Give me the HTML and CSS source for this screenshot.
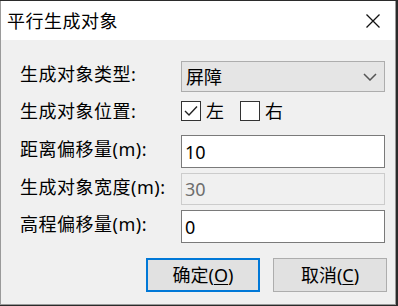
FILE: index.html
```html
<!DOCTYPE html>
<html lang="zh-CN">
<head>
    <meta charset="UTF-8">
    <meta name="viewport" content="width=device-width, initial-scale=1.0">
    <title>平行生成对象</title>
    <link rel="stylesheet" href="styles.css">
</head>
<body>
    <div class="window">
        <div class="titlebar">
            <span class="title">平行生成对象</span>
            <span class="closeBtn">
                <svg width="16" height="16" viewBox="0 0 16 16">
                    <path d="M1.5 1.5 L14.5 14.5 M14.5 1.5 L1.5 14.5" stroke="#111" stroke-width="1.3" fill="none"/>
                </svg>
            </span>
        </div>
        <div class="content">
            <div class="form">
                <label class="lbl">生成对象类型:</label>
                <div class="combo">
                    <span>屏障</span>
                    <svg width="14" height="8" viewBox="0 0 14 8">
                        <path d="M1 1 L7 7 L13 1" stroke="#555" stroke-width="1.5" fill="none"/>
                    </svg>
                </div>

                <label class="lbl">生成对象位置:</label>
                <div class="checks">
                    <span class="chk">
                        <span class="box">
                            <svg width="18" height="18" viewBox="0 0 18 18">
                                <path d="M3 9 L7 13 L15 4.5" stroke="#222" stroke-width="1.4" fill="none"/>
                            </svg>
                        </span>
                        左
                    </span>
                    <span class="chk">
                        <span class="box"></span>
                        右
                    </span>
                </div>

                <label class="lbl">距离偏移量(m):</label>
                <div class="field">10</div>

                <label class="lbl">生成对象宽度(m):</label>
                <div class="field disabled">30</div>

                <label class="lbl">高程偏移量(m):</label>
                <div class="field">0</div>
            </div>
            <div class="buttons">
                <button class="btn default">确定(<u>O</u>)</button>
                <button class="btn">取消(<u>C</u>)</button>
            </div>
        </div>
    </div>
</body>
</html>
```

FILE: styles.css
```css
body{
    margin: 0;
    background: #2b2b2b;
    font-family: "Noto Sans", "Noto Sans CJK SC", sans-serif;
    font-size: 18px;
    color: #000;
}
.window{
    width: 396px;
    height: 304px;
    margin-top: 1px;
    border: 1px solid #9a9a9a;
    border-top: none;
    box-sizing: border-box;
    background: #f0f0f0;
    display: flex;
    flex-direction: column;
}
.titlebar{
    height: 39px;
    background: #fff;
    display: flex;
    align-items: center;
    justify-content: space-between;
    padding: 0 14px 0 6px;
}
.title{
    font-size: 18px;
    line-height: 20px;
    letter-spacing: 0.5px;
}
.closeBtn{
    display: flex;
}
.content{
    padding: 21px 10px 0 19px;
}
.form{
    display: grid;
    grid-template-columns: 161px 204px;
    grid-template-rows: 31px 33px 33px 32px 33px;
    row-gap: 5px;
}
.lbl{
    display: flex;
    align-items: center;
    line-height: 20px;
    letter-spacing: 0.5px;
    padding-bottom: 5px;
}
.combo{
    border: 1px solid #adadad;
    background: #e5e5e5;
    display: flex;
    align-items: center;
    justify-content: space-between;
    padding: 0 7px 0 4px;
    line-height: 20px;
}
.checks{
    display: flex;
    align-items: center;
    gap: 16px;
    padding-bottom: 5px;
}
.chk{
    display: flex;
    align-items: center;
    gap: 5px;
    line-height: 20px;
}
.box{
    width: 18px;
    height: 18px;
    border: 1px solid #333;
    background: #fff;
    display: flex;
}
.field{
    border: 1px solid #7a7a7a;
    background: #fff;
    padding: 0 3px;
    display: flex;
    align-items: center;
    line-height: 20px;
}
.field.disabled{
    border-color: #cccccc;
    background: #f0f0f0;
    color: #6d6d6d;
}
.buttons{
    display: flex;
    justify-content: flex-end;
    gap: 13px;
    margin-top: 15px;
    margin-right: -2px;
}
.btn{
    width: 114px;
    height: 34px;
    border: 1px solid #adadad;
    background: #e1e1e1;
    font-family: "Noto Sans", "Noto Sans CJK SC", sans-serif;
    font-size: 18px;
    line-height: 20px;
    color: #000;
    padding: 0;
}
.btn.default{
    border: 2px solid #0078d7;
}
u{
    text-underline-offset: 2px;
}
```
